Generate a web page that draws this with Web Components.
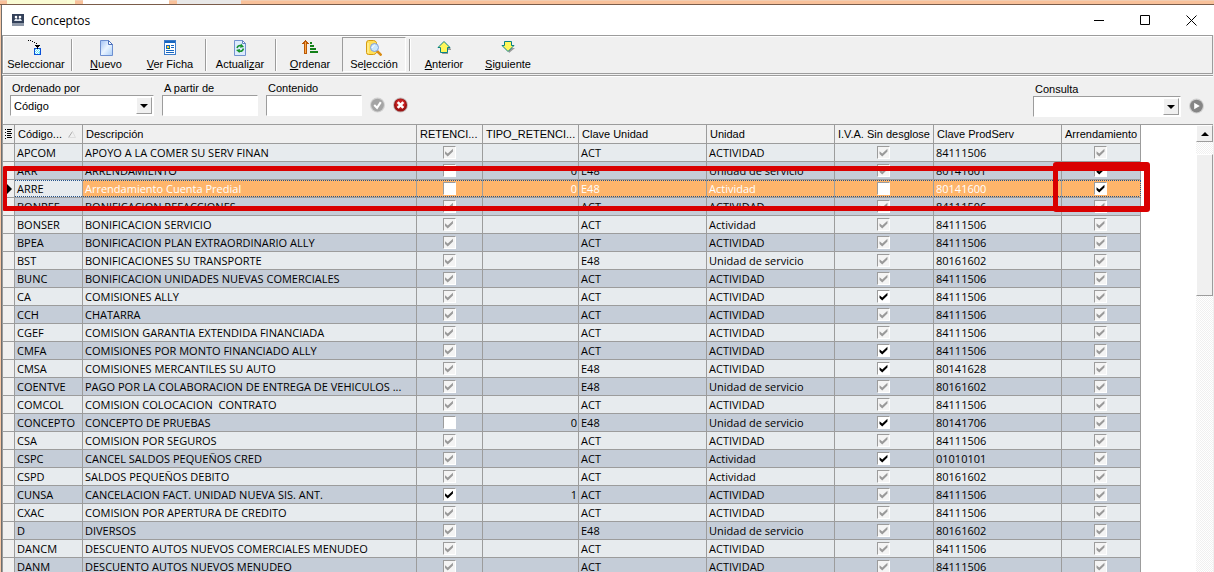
<!DOCTYPE html>
<html lang="es">
<head>
<meta charset="utf-8">
<title>Conceptos</title>
<style>
  body {
    margin: 0;
    height: 100vh;
    overflow: hidden;
    background: #f6c7a4;
    font-family: 'Liberation Sans', Arial, sans-serif;
    font-size: 11px;
    color: #000;
  }
</style>
</head>
<body>

<app-window heading="Conceptos">
  <tool-bar slot="bar">
    <tool-button icon="select">Seleccionar</tool-button>
    <tool-separator></tool-separator>
    <tool-button icon="page"><u>N</u>uevo</tool-button>
    <tool-button icon="card"><u>V</u>er Ficha</tool-button>
    <tool-separator></tool-separator>
    <tool-button icon="refresh">Actuali<u>z</u>ar</tool-button>
    <tool-separator></tool-separator>
    <tool-button icon="sort"><u>O</u>rdenar</tool-button>
    <tool-button icon="search" pressed>Se<u>l</u>ección</tool-button>
    <tool-separator></tool-separator>
    <tool-button icon="up"><u>A</u>nterior</tool-button>
    <tool-button icon="down"><u>S</u>iguiente</tool-button>
  </tool-bar>

  <filter-bar slot="bar">
    <combo-field label="Ordenado por" value="Código"></combo-field>
    <text-field label="A partir de"></text-field>
    <text-field label="Contenido"></text-field>
    <round-button icon="accept" label="Aplicar"></round-button>
    <round-button icon="cancel" label="Quitar filtro"></round-button>
    <combo-field slot="end" wide label="Consulta" value=""></combo-field>
    <round-button slot="end" icon="play" label="Ejecutar"></round-button>
  </filter-bar>

  <concept-grid></concept-grid>
</app-window>

<script>
const icons = {
  select: `<svg viewBox="0 0 16 16" shape-rendering="crispEdges"><path d="M0 0h1v1H0zM2 0h1v1H2zM4 1h1v1H4zM6 2h1v1H6zM8 3h1v1H8z"/><path d="M7 5h5v1h-1v1h-1v1H9V7H8V6H7z"/><path fill="#0a50d8" d="M6 8h7v7H6z"/><path fill="#6fe6fa" d="M7 9h5v5H7z"/><path fill="#fff" d="M8 9h1v1H8zM10 9h1v1h-1zM7 10h1v1H7zM9 10h1v1H9zM11 10h1v1h-1zM8 11h1v1H8zM10 11h1v1h-1zM7 12h1v1H7zM9 12h1v1H9zM8 13h1v1H8zM10 13h1v1h-1z"/><path d="M9 8h1v1H9z"/></svg>`,

  page: `<svg viewBox="0 0 16 16"><defs><linearGradient id="g" x2="1" y2="1"><stop offset="0" stop-color="#9fc0f4"/><stop offset=".5" stop-color="#eaf4ff"/><stop offset="1" stop-color="#a9cdf8"/></linearGradient></defs><path fill="url(#g)" stroke="#6d8fd0" d="M2.5 .5h8l4 4v11h-12z"/><path fill="#fff" stroke="#4a6fbc" d="M10.500 .5v4h4z"/></svg>`,

  card: `<svg viewBox="0 0 16 16" shape-rendering="crispEdges"><path fill="#3d7cc9" d="M2 0h12v15H2z"/><path fill="#fff" d="M3 3h10v11H3z"/><path fill="#1666c0" d="M3 1h10v2H3zM4 5h4v4H4zM9 5h3v1H9zM9 7h3v1H9zM4 10h8v1H4zM4 12h8v1H4z"/><path fill="#ffd22e" d="M5 6h2v2H5z"/><path fill="#117a2e" d="M6 8h2v1H6z"/></svg>`,

  refresh: `<svg viewBox="0 0 16 16"><path fill="#dcebfd" stroke="#7393cf" d="M2.500 .5h8l3 3v12h-11z"/><path fill="#fff" stroke="#6484c2" d="M10.500 .5v3h3z"/><g fill="none" stroke="#16922c" stroke-width="1.500"><path d="M5 8q1-3 4.500-2.300"/><path d="M11.500 8.500q-1 3.500-4.500 2.700"/></g><path fill="#16922c" d="M9 3.500l3 3.500-4 .7zM7.500 13L4 10l4-1z"/></svg>`,

  sort: `<svg viewBox="0 0 16 16" shape-rendering="crispEdges"><path fill="#b95908" d="M3 0h1v1h1v1h1v1h1v1H5v10H2V4H0V3h1V2h1V1h1z"/><path fill="#ffac4a" d="M3 2h1v11H3z"/><path fill="#138019" d="M8 2h2v2H8zM8 5h4v2H8zM8 8h6v2H8zM8 11h8v2H8z"/></svg>`,

  search: `<svg viewBox="0 0 16 16"><path fill="#ffdf58" stroke="#d59a10" d="M.5 3q0-2.500 2-2.500h5q2 0 3 2v10q-1 2-3 2h-5q-2 0-2-2z"/><path stroke="#fff7b5" d="M2 3v10"/><path stroke="#d98b14" stroke-width="2.500" d="M11 11l4.500 4.500"/><circle cx="8.500" cy="7.500" r="4" fill="#c9e7fc" stroke="#7f9fd8"/><path fill="none" stroke="#fff" d="M6 8q.5-2 2.500-2.500"/></svg>`,

  up: `<svg viewBox="0 0 16 16"><path fill="#999" d="M9 3l6 6v1h-3v4H6z"/><path fill="#fff75a" stroke="#078286" d="M8 1.500l6 6h-2.500v5h-7v-5H2z"/></svg>`,

  down: `<svg viewBox="0 0 16 16"><path fill="#999" d="M6 3h6v5h3l-6 5z"/><path fill="#fff75a" stroke="#078286" d="M4.500 1.500h7v4H14l-6 6-6-6h2.500z"/></svg>`,

  accept: `<svg viewBox="0 0 16 16"><circle cx="8" cy="8" r="8" fill="#d0d0d0"/><circle cx="8" cy="8" r="6.800" fill="#a4a4a4"/><path fill="none" stroke="#fff" stroke-width="2.200" d="M4.500 8l3 3L11.500 5"/></svg>`,

  cancel: `<svg viewBox="0 0 16 16"><circle cx="8" cy="8" r="8" fill="#c4bcbc"/><circle cx="8" cy="8" r="7" fill="#9c1515"/><circle cx="8" cy="7" r="5.200" fill="#c92222"/><path stroke="#fff" stroke-width="2.800" d="M5 5l6 6M11 5l-6 6"/></svg>`,

  play: `<svg viewBox="0 0 16 16"><circle cx="8" cy="8" r="8" fill="#d0d0d0"/><circle cx="8" cy="8" r="6.800" fill="#858585"/><path fill="#fff" d="M5.500 4.500l6 3.500-6 3.500z"/></svg>`
};


/* =============================================================================
  Window frame
============================================================================= */

class AppWindow extends HTMLElement {
  constructor(){
    super();
    this.attachShadow({ mode: 'open' });
    this.shadowRoot.innerHTML = `
      <style>
        :host {
          display: flex;
          flex-direction: column;
          height: 100vh;
        }

        .behind {
          flex: none;
          display: flex;
          gap: 8px;
          height: 4px;
          padding-left: 7px;
          background: linear-gradient(#f2cdb2 1px, #f9c19a 1px);
          border-bottom: 1px solid #7a5c4a;
        }

        .behind i { width: 68px; background: #f9fbd4; }
        .behind i + i { width: 86px; background: #fff; }
        .behind i + i + i { width: 64px; background: #e8e8e8; }

        .frame {
          flex: 1;
          min-height: 0;
          display: flex;
          flex-direction: column;
          margin-left: 1px;
          border-left: 1px solid #6e6e6e;
          background: #f0f0f0;
        }

        header {
          flex: none;
          display: flex;
          align-items: center;
          height: 30px;
          padding-left: 10px;
          background: #fff;
        }

        .logo { width: 12px; height: 12px; }

        h1 {
          flex: 1;
          margin: 0 0 0 7px;
          font: 12px 'Open Sans', 'Noto Sans', sans-serif;
        }

        button {
          display: flex;
          align-items: center;
          justify-content: center;
          width: 46px;
          height: 30px;
          padding: 0;
          border: 0;
          background: none;
        }

        button svg { width: 11px; height: 11px; fill: none; stroke: #000; }
      </style>

      <div class="behind"><i></i><i></i><i></i></div>
      <div class="frame">
        <header>
          <svg class="logo" viewBox="0 0 12 12"><path fill="#33415a" d="M0 0h12v9H0z"/><path fill="#8e98a8" d="M0 9h12v3H0z"/><circle cx="4" cy="3" r="1.300" fill="#fff"/><circle cx="8" cy="3" r="1.300" fill="#fff"/><path fill="#dfe5ee" d="M2 7q2-5 4-1 2-4 4 1z"/></svg>
          <h1></h1>
          <button aria-label="Minimizar"><svg viewBox="0 0 11 11"><path d="M0 5.500h10"/></svg></button>
          <button aria-label="Maximizar"><svg viewBox="0 0 11 11"><path d="M.5 .5h9v9h-9z"/></svg></button>
          <button aria-label="Cerrar"><svg viewBox="0 0 11 11"><path d="M.5 .5l10 10M10.500 .5l-10 10"/></svg></button>
        </header>
        <slot name="bar"></slot>
        <slot></slot>
      </div>
    `;
    this.shadowRoot.querySelector('h1').textContent = this.getAttribute('heading');
  }
}


/* =============================================================================
  Toolbar
============================================================================= */

class ToolBar extends HTMLElement {
  constructor(){
    super();
    this.attachShadow({ mode: 'open' });
    this.shadowRoot.innerHTML = `
      <style>
        :host {
          flex: none;
          display: flex;
          align-items: stretch;
          height: 37px;
          margin-right: 1px;
          padding-left: 1px;
          border: 1px solid #9c9c9c;
          box-shadow: inset 1px 1px #fff;
        }
      </style>
      <slot></slot>
    `;
  }
}

class ToolSeparator extends HTMLElement {
  constructor(){
    super();
    this.attachShadow({ mode: 'open' });
    this.shadowRoot.innerHTML = `
      <style>
        :host { display: flex; width: 6px; justify-content: center; padding: 3px 0 2px; }
        span { width: 1px; background: #9c9c9c; box-shadow: 1px 0 #fff; }
      </style>
      <span></span>
    `;
  }
}

class ToolButton extends HTMLElement {
  constructor(){
    super();
    this.attachShadow({ mode: 'open' });
    this.shadowRoot.innerHTML = `
      <style>
        :host { display: block; width: 64px; padding: 1px 0; }

        button {
          display: flex;
          flex-direction: column;
          align-items: center;
          width: 100%;
          height: 100%;
          padding: 2px 0 0;
          border: 1px solid transparent;
          background: none;
          font: inherit;
          line-height: 16px;
          white-space: nowrap;
        }

        :host([pressed]) button {
          border-color: #9c9c9c #fff #fff #9c9c9c;
          background: #f3f3f3;
        }

        svg { flex: none; width: 16px; height: 16px; }
      </style>
      <button>${icons[this.getAttribute('icon')]}<span><slot></slot></span></button>
    `;
  }
}


/* =============================================================================
  Filters
============================================================================= */

class FilterBar extends HTMLElement {
  constructor(){
    super();
    this.attachShadow({ mode: 'open' });
    this.shadowRoot.innerHTML = `
      <style>
        :host {
          flex: none;
          display: flex;
          justify-content: space-between;
          height: 48px;
          margin: 1px 1px 0 0;
          border-top: 1px solid #9c9c9c;
          border-left: 1px solid #9c9c9c;
          box-shadow: inset 1px 1px #fff;
        }

        div { display: flex; align-items: flex-start; gap: 8px; padding: 5px 9px 0 7px; }
        div + div { padding-top: 6px; }
      </style>
      <div><slot></slot></div>
      <div><slot name="end"></slot></div>
    `;
  }
}

const fieldStyle = `
  :host { display: block; }

  label { display: block; height: 14px; margin-left: 2px; line-height: 14px; }

  .box {
    box-sizing: border-box;
    height: 21px;
    border: 1px solid;
    border-color: #9c9c9c #fff #fff #9c9c9c;
    background: #fff;
  }

  input, select {
    box-sizing: border-box;
    width: 100%;
    height: 100%;
    padding: 0 3px;
    border: 0;
    outline: none;
    border-radius: 0;
    background: none;
    color: inherit;
    font: inherit;
    appearance: none;
  }
`;

class ComboField extends HTMLElement {
  constructor(){
    super();
    const value = this.getAttribute('value');
    this.attachShadow({ mode: 'open' });
    this.shadowRoot.innerHTML = `
      <style>
        ${fieldStyle}
        :host { width: 144px; }
        :host([wide]) { width: 148px; }
        .box { display: grid; grid-template-columns: 1fr 17px; }
        select { grid-area: 1 / 1 / 2 / 3; }

        .arrow {
          grid-area: 1 / 2;
          display: flex;
          align-items: center;
          justify-content: center;
          margin: 1px 1px 1px 0;
          border: 1px solid;
          border-color: #fff #9c9c9c #9c9c9c #fff;
          background: #f0f0f0;
          pointer-events: none;
        }

        .arrow::before {
          content: '';
          border: 4px solid transparent;
          border-top-color: #000;
          border-bottom: 0;
        }
      </style>
      <label for="field">${this.getAttribute('label')}</label>
      <div class="box">
        <select id="field"><option>${value}</option></select>
        <span class="arrow"></span>
      </div>
    `;
  }
}

class TextField extends HTMLElement {
  constructor(){
    super();
    this.attachShadow({ mode: 'open' });
    this.shadowRoot.innerHTML = `
      <style>
        ${fieldStyle}
        :host { width: 96px; }
      </style>
      <label for="field">${this.getAttribute('label')}</label>
      <div class="box"><input id="field" type="text"></div>
    `;
  }
}

class RoundButton extends HTMLElement {
  constructor(){
    super();
    this.attachShadow({ mode: 'open' });
    this.shadowRoot.innerHTML = `
      <style>
        :host { display: block; padding-top: 16px; }
        button { display: block; width: 15px; height: 16px; padding: 0; border: 0; background: none; }
        svg { display: block; width: 15px; height: 16px; }
      </style>
      <button aria-label="${this.getAttribute('label')}">${icons[this.getAttribute('icon')]}</button>
    `;
  }
}


/* =============================================================================
  Grid
============================================================================= */

const columns = [
  ['Código...', 68],
  ['Descripción', 334],
  ['RETENCI...', 66],
  ['TIPO_RETENCI...', 96],
  ['Clave Unidad', 128],
  ['Unidad', 128],
  ['I.V.A. Sin desglose', 99],
  ['Clave ProdServ', 128],
  ['Arrendamiento', 79]
];

// null = no value (greyed tick), true / false = set by the user
const rows = [
  ['APCOM', 'APOYO A LA COMER SU SERV FINAN', null, '', 'ACT', 'ACTIVIDAD', null, '84111506', null],
  ['ARR', 'ARRENDAMIENTO', false, '0', 'E48', 'Unidad de servicio', null, '80141601', true],
  ['ARRE', 'Arrendamiento Cuenta Predial', false, '0', 'E48', 'Actividad', false, '80141600', true],
  ['BONREF', 'BONIFICACION REFACCIONES', null, '', 'ACT', 'ACTIVIDAD', null, '84111506', null],
  ['BONSER', 'BONIFICACION SERVICIO', null, '', 'ACT', 'Actividad', null, '84111506', null],
  ['BPEA', 'BONIFICACION PLAN EXTRAORDINARIO ALLY', null, '', 'ACT', 'ACTIVIDAD', null, '84111506', null],
  ['BST', 'BONIFICACIONES SU TRANSPORTE', null, '', 'E48', 'Unidad de servicio', null, '80161602', null],
  ['BUNC', 'BONIFICACION UNIDADES NUEVAS COMERCIALES', null, '', 'ACT', 'ACTIVIDAD', null, '84111506', null],
  ['CA', 'COMISIONES ALLY', null, '', 'ACT', 'ACTIVIDAD', true, '84111506', null],
  ['CCH', 'CHATARRA', null, '', 'ACT', 'ACTIVIDAD', null, '84111506', null],
  ['CGEF', 'COMISION GARANTIA EXTENDIDA FINANCIADA', null, '', 'ACT', 'ACTIVIDAD', null, '84111506', null],
  ['CMFA', 'COMISIONES POR MONTO FINANCIADO ALLY', null, '', 'ACT', 'ACTIVIDAD', true, '84111506', null],
  ['CMSA', 'COMISIONES MERCANTILES SU AUTO', null, '', 'E48', 'ACTIVIDAD', true, '80141628', null],
  ['COENTVE', 'PAGO POR LA COLABORACION DE ENTREGA DE VEHICULOS ...', null, '', 'E48', 'Unidad de servicio', null, '80161602', null],
  ['COMCOL', 'COMISION COLOCACION  CONTRATO', null, '', 'ACT', 'ACTIVIDAD', null, '84111506', null],
  ['CONCEPTO', 'CONCEPTO DE PRUEBAS', false, '0', 'E48', 'Unidad de servicio', true, '80141706', null],
  ['CSA', 'COMISION POR SEGUROS', null, '', 'ACT', 'ACTIVIDAD', null, '84111506', null],
  ['CSPC', 'CANCEL SALDOS PEQUEÑOS CRED', null, '', 'ACT', 'Actividad', true, '01010101', null],
  ['CSPD', 'SALDOS PEQUEÑOS DEBITO', null, '', 'ACT', 'Actividad', null, '80161602', null],
  ['CUNSA', 'CANCELACION FACT. UNIDAD NUEVA SIS. ANT.', true, '1', 'ACT', 'ACTIVIDAD', null, '84111506', null],
  ['CXAC', 'COMISION POR APERTURA DE CREDITO', null, '', 'ACT', 'ACTIVIDAD', null, '84111506', null],
  ['D', 'DIVERSOS', null, '', 'E48', 'Unidad de servicio', null, '80161602', null],
  ['DANCM', 'DESCUENTO AUTOS NUEVOS COMERCIALES MENUDEO', null, '', 'ACT', 'ACTIVIDAD', null, '84111506', null],
  ['DANM', 'DESCUENTO AUTOS NUEVOS MENUDEO', null, '', 'ACT', 'ACTIVIDAD', null, '84111506', null]
];

const selectedCode = 'ARRE';

class ConceptGrid extends HTMLElement {
  constructor(){
    super();
    this.attachShadow({ mode: 'open' });
    this.shadowRoot.innerHTML = `
      <style>
        :host {
          flex: 1;
          min-height: 0;
          display: flex;
          justify-content: space-between;
          position: relative;
          margin-right: 1px;
          overflow: hidden;
          border-top: 1px solid #9c9c9c;
          border-left: 1px solid #9c9c9c;
          background: #fff;
        }

        .table { flex: none; }

        table {
          width: 1138px;
          table-layout: fixed;
          border-collapse: separate;
          border-spacing: 0;
        }

        th, td {
          box-sizing: border-box;
          height: 18px;
          padding: 0 2px;
          overflow: hidden;
          border-right: 1px solid #9c9c9c;
          border-bottom: 1px solid #9c9c9c;
          line-height: 17px;
          text-align: left;
          white-space: pre;
          font-weight: normal;
        }

        th { height: 19px; padding: 0 3px; background: #f0f0f0; }
        tbody { font-family: 'Open Sans', 'Noto Sans', sans-serif; }
        tbody td { background: #e7ebee; }
        tbody tr:nth-child(even) td { background: #c5cdd8; }
        tbody tr td:first-child { background: #f0f0f0 !important; padding: 0; }
        th:first-child { padding: 0 0 0 2px; }
        th svg, td svg { display: block; }
        th .sort { display: inline; margin-left: 6px; }

        .check { padding: 0 1px 0 0; }
        .number { text-align: right; padding-right: 1px; }

        .selected td:not(:first-child) {
          background:
            repeating-linear-gradient(90deg, #25538c 0 1px, transparent 1px 2px) 0 0 / 100% 1px no-repeat,
            repeating-linear-gradient(90deg, #25538c 0 1px, transparent 1px 2px) 0 100% / 100% 1px no-repeat,
            #ffb56b;
          color: #fff;
        }

        .selected td:nth-child(2) { background-color: #e7ebee !important; color: #000 !important; }
        .selected td:last-child { border-right: 1px dotted #25538c; }

        input {
          display: grid;
          place-content: center;
          box-sizing: border-box;
          width: 13px;
          height: 13px;
          margin: 0 auto;
          border: 1px solid;
          border-color: #9c9c9c #fff #fff #9c9c9c;
          background: #fff;
          appearance: none;
        }

        input:disabled { background: #f4f4f4; }

        input:checked::before {
          content: '';
          width: 9px;
          height: 9px;
          background: #000;
          clip-path: polygon(6% 35%, 36% 60%, 94% 8%, 94% 38%, 36% 94%, 6% 66%);
        }

        input:disabled::before { background: #9a9a9a !important; }

        .scroll {
          flex: none;
          width: 17px;
          display: flex;
          flex-direction: column;
          background: repeating-conic-gradient(#f0f0f0 0 25%, #fff 0 50%) 0 0 / 2px 2px;
        }

        .scroll button {
          height: 17px;
          padding: 0;
          border: 1px solid;
          border-color: #fff #9c9c9c #9c9c9c #fff;
          background: #f0f0f0;
        }

        .scroll button::before {
          content: '';
          display: block;
          width: 0;
          margin: 0 auto;
          border: 4px solid transparent;
          border-bottom-color: #000;
          border-top: 0;
        }

        .thumb {
          height: 140px;
          margin-top: 12px;
          border: 1px solid;
          border-color: #fff #9c9c9c #9c9c9c #fff;
          background: #f0f0f0;
        }

        /* highlight marks drawn over the grid */
        .mark {
          position: absolute;
          box-sizing: border-box;
          border: 5px solid #d90000;
          border-radius: 3px;
        }

        .mark.row { left: -1px; top: 41px; width: 1147px; height: 45px; }
        .mark.cell { left: 1050px; top: 37px; width: 97px; height: 50px; border-width: 9px 6px 6px 5px; }
      </style>

      <div class="table">
        <table>
          <colgroup><col style="width: 12px"></colgroup>
          <thead><tr><th aria-label="Menú"><svg width="8" height="10" viewBox="0 0 8 10" shape-rendering="crispEdges"><path d="M0 0h1v1H0zM2 0h5v1H2zM0 3h1v1H0zM2 2h4v1H2zM2 4h5v1H2zM0 6h1v1H0zM2 6h4v1H2zM0 9h1v1H0zM2 8h5v1H2z"/></svg></th></tr></thead>
          <tbody></tbody>
        </table>
      </div>
      <div class="scroll"><button aria-label="Subir"></button><div class="thumb"></div></div>
      <div class="mark row"></div>
      <div class="mark cell"></div>
    `;
  }


  connectedCallback(){
    const root = this.shadowRoot;

    columns.forEach(([title, width], index) => {
      const col = document.createElement('col');
      col.style.width = width + 'px';
      root.querySelector('colgroup').appendChild(col);

      const th = document.createElement('th');
      th.textContent = title;
      if(index === 0){
        th.insertAdjacentHTML('beforeend', '<svg class="sort" width="8" height="7" viewBox="0 0 8 7"><path fill="none" stroke="#aaa" d="M.5 6.500L4.500 .5"/><path fill="none" stroke="#ddd" d="M4.500 .5l3 6h-7"/></svg>');
      }
      root.querySelector('thead tr').appendChild(th);
    });

    rows.forEach(row => {
      const tr = root.querySelector('tbody').insertRow();
      const marker = tr.insertCell();
      if(row[0] === selectedCode){
        tr.className = 'selected';
        marker.innerHTML = '<svg width="10" height="10" viewBox="0 0 10 10"><path d="M4 0l5 5-5 5z"/></svg>';
      }

      row.forEach((value, index) => {
        const td = tr.insertCell();
        if(typeof value === 'string'){
          td.textContent = value;
          if(index === 3) td.className = 'number';
        } else {
          td.className = 'check';
          td.appendChild(this.checkbox(value, columns[index][0] + ' ' + row[0]));
        }
      });
    });
  }


  checkbox(value, label){
    const input = document.createElement('input');
    input.type = 'checkbox';
    input.checked = value !== false;
    input.disabled = value === null;
    input.setAttribute('aria-label', label);
    return input;
  }
}


window.customElements.define('app-window', AppWindow);
window.customElements.define('tool-bar', ToolBar);
window.customElements.define('tool-separator', ToolSeparator);
window.customElements.define('tool-button', ToolButton);
window.customElements.define('filter-bar', FilterBar);
window.customElements.define('combo-field', ComboField);
window.customElements.define('text-field', TextField);
window.customElements.define('round-button', RoundButton);
window.customElements.define('concept-grid', ConceptGrid);
</script>
</body>
</html>
